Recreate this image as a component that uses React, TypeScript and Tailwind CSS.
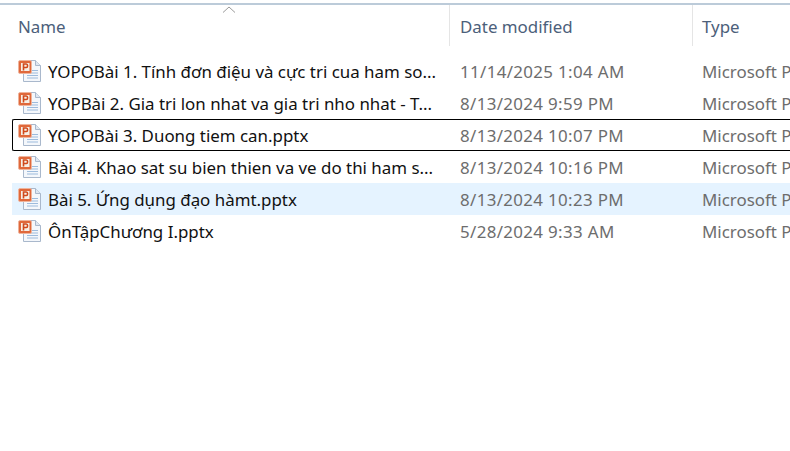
const files = [
  { name: 'YOPOBài 1. Tính đơn điệu và cực tri cua ham so...', date: '11/14/2025 1:04 AM' },
  { name: 'YOPBài 2. Gia tri lon nhat va gia tri nho nhat - T...', date: '8/13/2024 9:59 PM' },
  { name: 'YOPOBài 3. Duong tiem can.pptx', date: '8/13/2024 10:07 PM', focused: true },
  { name: 'Bài 4. Khao sat su bien thien va ve do thi ham s...', date: '8/13/2024 10:16 PM' },
  { name: 'Bài 5. Ứng dụng đạo hàmt.pptx', date: '8/13/2024 10:23 PM', selected: true },
  { name: 'ÔnTậpChương I.pptx', date: '5/28/2024 9:33 AM' },
];

const PptIcon = () => (
  <svg width="24" height="24" viewBox="0 0 24 24" className="shrink-0">
    <path d="M5.5 1.5H17.5L22.5 6.5V22.5H5.5Z" fill="#f4f7fb" stroke="#a9b8cc" />
    <path d="M17.5 1.5V6.5H22.5" fill="#dfe7f1" stroke="#a9b8cc" />
    <path d="M9 11.5H20M9 14H20M9 16.5H20M9 19H20" stroke="#9dbbdc" />
    <rect x="0.5" y="1.5" width="13" height="13" rx="1.5" fill="#e0683a" stroke="#efb49c" />
    <rect x="3" y="4" width="8.5" height="8" fill="#f6efe6" />
    <path d="M5.5 11.5V5H8.3C10 5 10 8.5 8.3 8.5H5.5" fill="none" stroke="#d0491b" strokeWidth="1.6" />
  </svg>
);

export default function App() {
  return (
    <div className="w-[790px] h-[451px] overflow-hidden bg-white font-['Noto_Sans',sans-serif] text-[16.9px] leading-[24px]">
      <div className="h-[3px]" />
      <div className="h-[2px] bg-[#bccbd9]" />
      {/* Column headers */}
      <div className="relative flex h-[41px] text-[#4c607a]">
        <div className="w-[450px] shrink-0 pl-[18px] pt-[10px] border-r border-[#e5e5e5]">Name</div>
        <div className="w-[243px] shrink-0 pl-[10px] pt-[10px] border-r border-[#e5e5e5]">Date modified</div>
        <div className="pl-[9px] pt-[10px]">Type</div>
        <svg width="14" height="7" viewBox="0 0 14 7" className="absolute left-[222px] top-[1px]">
          <path d="M1 6.5L7 1L13 6.5" fill="none" stroke="#9a9a9a" />
        </svg>
      </div>
      <div className="h-[9px]" />
      {/* File rows */}
      <div className="pl-[12px]">
        {files.map(file => (
          <div
            key={file.name}
            className={`flex items-center h-[32px] border ${
              file.focused
                ? 'border-black rounded-l-[2px] border-r-0'
                : file.selected
                  ? 'border-transparent bg-[#e5f3ff]'
                  : 'border-transparent'
            }`}
          >
            <div className="flex items-center w-[437px] shrink-0 pl-[5px] gap-[6px] text-[#111111] whitespace-nowrap">
              <PptIcon />
              <span className="pt-[2px]">{file.name}</span>
            </div>
            <div className="w-[243px] shrink-0 pl-[10px] pt-[2px] tracking-[0.35px] text-[#6d6d6d] whitespace-nowrap">{file.date}</div>
            <div className="shrink-0 pl-[9px] pt-[2px] text-[#6d6d6d] whitespace-nowrap">Microsoft P</div>
          </div>
        ))}
      </div>
    </div>
  );
}
